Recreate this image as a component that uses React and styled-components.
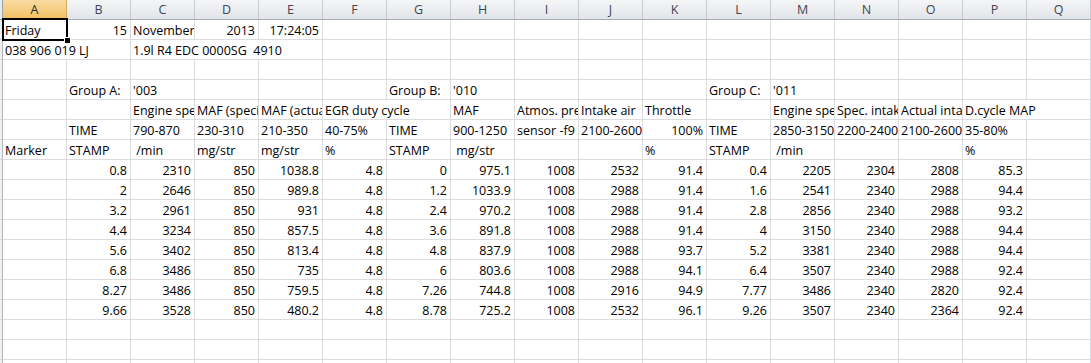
import React from 'react';
import styled, { createGlobalStyle } from 'styled-components';

const GlobalStyle = createGlobalStyle`
  html, body {
    margin: 0;
    padding: 0;
    background: #fff;
    overflow: hidden;
  }
  body {
    font-family: "Open Sans", "Liberation Sans", sans-serif;
  }
`;

const COLS = ['A', 'B', 'C', 'D', 'E', 'F', 'G', 'H', 'I', 'J', 'K', 'L', 'M', 'N', 'O', 'P', 'Q'];

// one entry per column A..Q; strings sit left, numbers sit right,
// objects carry a span where Excel lets the text run over empty cells
const rows = [
  ['Friday', 15, 'November', 2013, { v: '17:24:05', right: true }],
  [{ v: '038 906 019 LJ', span: 2 }, null, { v: '1.9l R4 EDC 0000SG  4910', span: 3 }],
  [],
  [null, 'Group A:', "'003", null, null, null, 'Group B:', "'010", null, null, null, 'Group C:', "'011"],
  [null, null, 'Engine speed', 'MAF (specified)', 'MAF (actual)', { v: 'EGR duty cycle', span: 2 }, null,
    'MAF', 'Atmos. pressure', 'Intake air', 'Throttle', null, 'Engine speed', 'Spec. intake', 'Actual intake',
    { v: 'D.cycle MAP', span: 2 }],
  [null, 'TIME', '790-870', '230-310', '210-350', '40-75%', 'TIME', '900-1250', 'sensor -f9', '2100-2600',
    { v: '100%', right: true }, 'TIME', '2850-3150', '2200-2400', '2100-2600', '35-80%'],
  ['Marker', 'STAMP', ' /min', 'mg/str', 'mg/str', '%', 'STAMP', ' mg/str', null, null, '%', 'STAMP', ' /min', null, null, '%'],
  [null, 0.8, 2310, 850, 1038.8, 4.8, 0, 975.1, 1008, 2532, 91.4, 0.4, 2205, 2304, 2808, 85.3],
  [null, 2, 2646, 850, 989.8, 4.8, 1.2, 1033.9, 1008, 2988, 91.4, 1.6, 2541, 2340, 2988, 94.4],
  [null, 3.2, 2961, 850, 931, 4.8, 2.4, 970.2, 1008, 2988, 91.4, 2.8, 2856, 2340, 2988, 93.2],
  [null, 4.4, 3234, 850, 857.5, 4.8, 3.6, 891.8, 1008, 2988, 91.4, 4, 3150, 2340, 2988, 94.4],
  [null, 5.6, 3402, 850, 813.4, 4.8, 4.8, 837.9, 1008, 2988, 93.7, 5.2, 3381, 2340, 2988, 94.4],
  [null, 6.8, 3486, 850, 735, 4.8, 6, 803.6, 1008, 2988, 94.1, 6.4, 3507, 2340, 2988, 92.4],
  [null, 8.27, 3486, 850, 759.5, 4.8, 7.26, 744.8, 1008, 2916, 94.9, 7.77, 3486, 2340, 2820, 92.4],
  [null, 9.66, 3528, 850, 480.2, 4.8, 8.78, 725.2, 1008, 2532, 96.1, 9.26, 3507, 2340, 2364, 92.4],
  [],
  [],
  [],
];

function buildCells(row) {
  const cells = [];
  for (let c = 0; c < COLS.length; c++) {
    const raw = row[c];
    if (raw === null || raw === undefined) {
      cells.push({ key: c, v: '', span: 1, right: false });
      continue;
    }
    if (typeof raw === 'object') {
      const span = raw.span || 1;
      cells.push({ key: c, v: raw.v, span, right: !!raw.right });
      c += span - 1;
      continue;
    }
    cells.push({ key: c, v: String(raw), span: 1, right: typeof raw === 'number' });
  }
  return cells;
}

export default function App() {
  return (
    <>
      <GlobalStyle />
      <Sheet>
        <Row>
          <Corner />
          {COLS.map((c, i) => (
            <ColHead key={c} $active={i === 0}>{c}</ColHead>
          ))}
        </Row>
        {rows.map((row, r) => (
          <Row key={r}>
            <RowHead />
            {buildCells(row).map((cell) => {
              const selected = r === 0 && cell.key === 0;
              return (
                <Cell key={cell.key} $span={cell.span} $right={cell.right} $selected={selected}>
                  {cell.v}
                  {selected && (
                    <Selection>
                      <FillHandle />
                    </Selection>
                  )}
                </Cell>
              );
            })}
          </Row>
        ))}
      </Sheet>
    </>
  );
}

// Styling -----------------------------------

const GRID = '#dadcdd';

const Sheet = styled.div`
  width: 1091px;
  height: 363px;
  overflow: hidden;
  font-family: "Open Sans", "Liberation Sans", sans-serif;
  font-size: 12.5px;
  color: #000;
`;

const Row = styled.div`
  display: grid;
  grid-template-columns: 3px repeat(17, 64px);
  height: 20px;
`;

const Corner = styled.div`
  background: #e6e9ed;
  border-right: 1px solid #9ea3a9;
  border-bottom: 1px solid #9ea3a9;
`;

const RowHead = styled.div`
  background: #eef0f3;
  border-right: 1px solid #b4b8bd;
  border-bottom: 1px solid #d0d3d7;
`;

const ColHead = styled.div`
  box-sizing: border-box;
  height: 20px;
  text-align: center;
  line-height: 20px;
  font-size: 12.5px;
  color: ${(p) => (p.$active ? '#2b2b2b' : '#3e4652')};
  background: ${(p) =>
    p.$active
      ? 'linear-gradient(#f9dba3, #f1c161)'
      : 'linear-gradient(#f4f5f7, #e2e5e9)'};
  border-right: 1px solid ${(p) => (p.$active ? '#d2aa5c' : '#c8ccd1')};
  border-bottom: 1px solid ${(p) => (p.$active ? '#c29b4d' : '#a6abb1')};
`;

const Cell = styled.div`
  grid-column: span ${(p) => p.$span};
  position: relative;
  box-sizing: border-box;
  height: 20px;
  padding: ${(p) => (p.$right ? '0 3px 0 0' : '0 0 0 2px')};
  text-align: ${(p) => (p.$right ? 'right' : 'left')};
  line-height: 21px;
  white-space: pre;
  overflow: ${(p) => (p.$selected ? 'visible' : 'hidden')};
  border-right: 1px solid ${GRID};
  border-bottom: 1px solid ${GRID};
  z-index: ${(p) => (p.$selected ? 2 : 'auto')};
`;

const Selection = styled.div`
  position: absolute;
  top: -2px;
  left: -1px;
  right: -2px;
  bottom: -2px;
  border: 2px solid #000;
  pointer-events: none;
`;

const FillHandle = styled.div`
  position: absolute;
  right: -5px;
  bottom: -5px;
  width: 5px;
  height: 5px;
  background: #000;
  border: 1px solid #fff;
`;
